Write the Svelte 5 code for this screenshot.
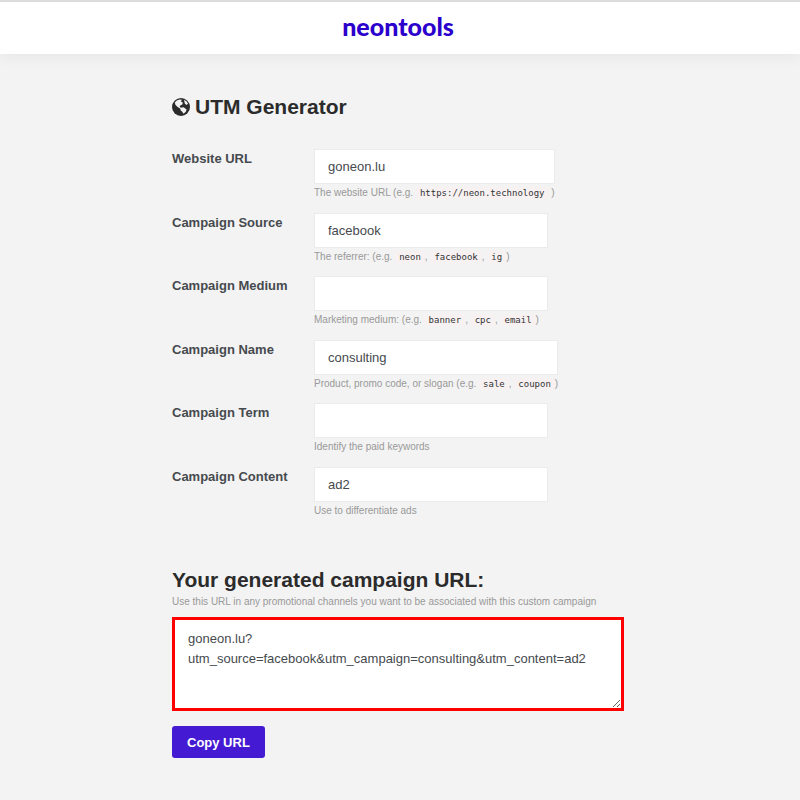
<script lang="ts">
	let website = $state('goneon.lu');
	let source = $state('facebook');
	let medium = $state('');
	let name = $state('consulting');
	let term = $state('');
	let content = $state('ad2');

	// Only filled-in fields end up in the query
	let url = $derived.by(() => {
		const params = [
			['utm_source', source],
			['utm_medium', medium],
			['utm_campaign', name],
			['utm_term', term],
			['utm_content', content]
		];
		const query = params
			.filter(([, value]) => value)
			.map(([key, value]) => `${key}=${encodeURIComponent(value)}`)
			.join('&');
		return query ? `${website}?${query}` : website;
	});

	function copyUrl() {
		navigator.clipboard.writeText(url);
	}
</script>

<header>
	<a class="logo" href="/">neontools</a>
</header>

<main>
	<h1>
		<svg viewBox="0 0 18 18" aria-hidden="true">
			<circle cx="9" cy="9" r="9" />
			<path d="M2.8 4.6 4.8 2.6 7.6 1.5 10 1.8 8.8 3.6 10.8 4.6 10.4 6.6 8.6 7.2 7.6 8.6 8.8 9.8 11.6 9.2 14.6 11.4 13.8 13.8 11.6 15.8 10.2 13.8 8.6 12.2 8.2 10.6 5.6 9 3.4 6.8Z" />
			<path d="M12 1.8 14.2 3.2 16 5.6 14.6 7 12.8 5.6Z" />
		</svg>
		UTM Generator
	</h1>

	<form onsubmit={(e) => e.preventDefault()}>
		<div class="row">
			<label for="website">Website URL</label>
			<div class="field">
				<input id="website" type="text" bind:value={website} />
				<p class="hint">The website URL (e.g. <code>https://neon.technology</code> )</p>
			</div>
		</div>
		<div class="row">
			<label for="source">Campaign Source</label>
			<div class="field">
				<input id="source" type="text" bind:value={source} />
				<p class="hint">The referrer: (e.g. <code>neon</code>, <code>facebook</code>, <code>ig</code>)</p>
			</div>
		</div>
		<div class="row">
			<label for="medium">Campaign Medium</label>
			<div class="field">
				<input id="medium" type="text" bind:value={medium} />
				<p class="hint">Marketing medium: (e.g. <code>banner</code>, <code>cpc</code>, <code>email</code>)</p>
			</div>
		</div>
		<div class="row">
			<label for="name">Campaign Name</label>
			<div class="field">
				<input id="name" type="text" bind:value={name} />
				<p class="hint">Product, promo code, or slogan (e.g. <code>sale</code>, <code>coupon</code>)</p>
			</div>
		</div>
		<div class="row">
			<label for="term">Campaign Term</label>
			<div class="field">
				<input id="term" type="text" bind:value={term} />
				<p class="hint">Identify the paid keywords</p>
			</div>
		</div>
		<div class="row">
			<label for="content">Campaign Content</label>
			<div class="field">
				<input id="content" type="text" bind:value={content} />
				<p class="hint">Use to differentiate ads</p>
			</div>
		</div>
	</form>

	<section>
		<h2 id="result-title">Your generated campaign URL:</h2>
		<p class="hint">Use this URL in any promotional channels you want to be associated with this custom campaign</p>
		<textarea aria-labelledby="result-title" readonly value={url}></textarea>
		<button type="button" onclick={copyUrl}>Copy URL</button>
	</section>
</main>

<style>
	:global(body) {
		background: #f3f3f3;
		color: #464a4e;
		font-family: 'Liberation Sans', Arial, sans-serif;
		font-size: 13px;
	}

	header {
		display: flex;
		justify-content: center;
		height: 52px;
		padding-right: 4px;
		background: #fff;
		border-top: 2px solid #dcdcdc;
		box-shadow: 0 0 16px rgba(0, 0, 0, 0.08);
	}

	.logo {
		font-family: Lato, sans-serif;
		font-size: 25px;
		font-weight: 900;
		line-height: 48px;
		color: #2b00cc;
		text-decoration: none;
	}

	main {
		max-width: 456px;
		margin: 0 auto;
		padding: 40px 0;
	}

	h1,
	h2 {
		margin: 0;
		font-size: 21px;
		line-height: 26px;
		color: #2b2b2b;
	}

	h1 {
		display: flex;
		align-items: center;
		gap: 5px;
		margin-bottom: 29px;
	}

	h1 svg {
		width: 18px;
		height: 18px;
		fill: #2b2b2b;
	}

	h1 path {
		fill: #f3f3f3;
	}

	form {
		display: grid;
		grid-auto-rows: 1fr;
		min-height: 381px;
	}

	.row {
		display: flex;
		align-items: flex-start;
	}

	.row label {
		width: 142px;
		line-height: 20px;
		font-weight: bold;
	}

	.field {
		min-width: 234px;
	}

	input {
		display: block;
		box-sizing: border-box;
		width: 100%;
		height: 35px;
		padding: 0 13px;
		border: 1px solid #ebebeb;
		background: #fff;
		color: #464a4e;
		font: inherit;
	}

	.hint {
		margin: 0;
		font-size: 10px;
		line-height: 18px;
		color: #999;
		white-space: nowrap;
	}

	code {
		padding: 1px 4px;
		border-radius: 3px;
		background: #f7f1f2;
		color: #333;
		font-family: 'DejaVu Sans Mono', monospace;
		font-size: 9px;
		line-height: 1;
	}

	section {
		margin-top: 37px;
	}

	textarea {
		display: block;
		box-sizing: border-box;
		width: 452px;
		max-width: 100%;
		height: 94px;
		margin-top: 6px;
		padding: 9px 13px;
		border: 3px solid #f00;
		background: #fff;
		color: #464a4e;
		font: inherit;
		line-height: 20px;
	}

	button {
		height: 32px;
		margin-top: 15px;
		padding: 0 15px;
		border: 0;
		border-radius: 3px;
		background: #441bd2;
		color: #fff;
		font: inherit;
		font-weight: bold;
		cursor: pointer;
	}
</style>
